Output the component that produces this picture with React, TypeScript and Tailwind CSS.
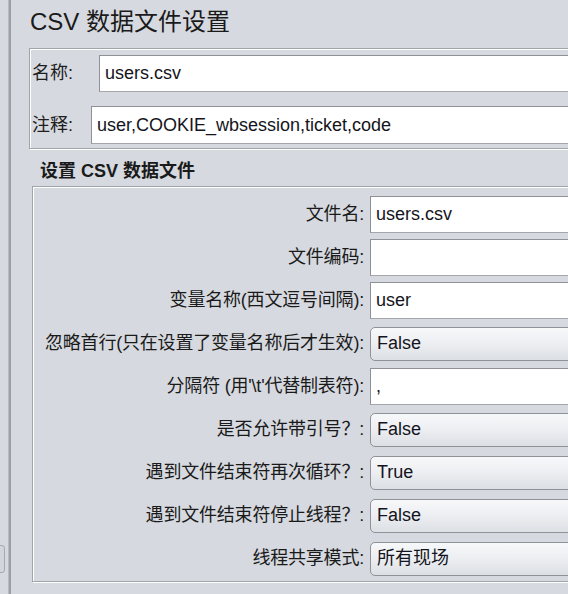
import React from 'react'

type Row = { label: string; value: string; kind: 'text' | 'combo' }

const rows: Row[] = [
  { label: '文件名:', value: 'users.csv', kind: 'text' },
  { label: '文件编码:', value: '', kind: 'text' },
  { label: '变量名称(西文逗号间隔):', value: 'user', kind: 'text' },
  { label: '忽略首行(只在设置了变量名称后才生效):', value: 'False', kind: 'combo' },
  { label: "分隔符 (用'\\t'代替制表符):", value: ',', kind: 'text' },
  { label: '是否允许带引号？:', value: 'False', kind: 'combo' },
  { label: '遇到文件结束符再次循环？:', value: 'True', kind: 'combo' },
  { label: '遇到文件结束符停止线程？:', value: 'False', kind: 'combo' },
  { label: '线程共享模式:', value: '所有现场', kind: 'combo' },
]

function TextField({ value, className = '' }: { value: string; className?: string }) {
  return (
    <div
      className={`flex items-center bg-white border border-[#a3a6ab] border-t-[#8e9196] border-l-[#8e9196] pl-[5px] text-[18px] text-[#141420] ${className}`}
    >
      {value}
    </div>
  )
}

function Combo({ value }: { value: string }) {
  return (
    <div className="flex items-center h-[34px] rounded-[5px] border border-[#8f9297] bg-gradient-to-b from-[#f7f8fa] via-[#eceef1] to-[#dcdfe4] pl-[6px] text-[18px] text-[#141420]">
      {value}
    </div>
  )
}

export default function App() {
  return (
    <div
      className="relative w-[568px] h-[594px] overflow-hidden bg-[#d6d9df] flex"
      style={{ fontFamily: '"Liberation Sans", "Noto Sans CJK SC", sans-serif' }}
    >
      {/* left split pane edge */}
      <div className="w-[8px] shrink-0 flex flex-col">
        <div className="mt-[545px] ml-[-4px] w-[9px] h-[28px] rounded-[3px] border border-[#a6a9ae] bg-[#d2d5db]" />
      </div>
      <div className="w-[1px] shrink-0 bg-[#b9bcc1]" />
      <div className="w-[2px] shrink-0 bg-[#9c9fa4]" />

      {/* main panel */}
      <div className="w-[640px] shrink-0 flex flex-col">
        <div className="mt-[6px] ml-[19px] text-[24px] leading-[32px] text-[#1a1a1a]">CSV 数据文件设置</div>

        <div className="mt-[10px] ml-[18px] border border-[#a1a4a9] shadow-[inset_1px_1px_0_#fff,1px_1px_0_#fff] pl-[2px] pt-[6px] pb-[4px] flex flex-col gap-[14px]">
          <div className="flex items-center">
            <div className="w-[67px] text-[18px] text-[#1e1e1e]">名称:</div>
            <TextField value="users.csv" className="flex-1 h-[37px]" />
          </div>
          <div className="flex items-center">
            <div className="w-[59px] text-[18px] text-[#1e1e1e]">注释:</div>
            <TextField value="user,COOKIE_wbsession,ticket,code" className="flex-1 h-[38px]" />
          </div>
        </div>

        <div className="mt-[10px] ml-[29px] text-[18px] leading-[24px] font-bold text-[#1a1a1a]">设置 CSV 数据文件</div>

        <div className="mt-[3px] ml-[21px] border border-[#a1a4a9] shadow-[inset_1px_1px_0_#fff,1px_1px_0_#fff] pt-[6px] pb-[1px]">
          {rows.map((r) => (
            <div key={r.label} className="grid grid-cols-[331px_1fr] gap-x-[6px] h-[43px] items-center">
              <div className="text-right text-[18px] tracking-[-0.2px] text-[#1a1a1a] whitespace-nowrap">{r.label}</div>
              {r.kind === 'text' ? <TextField value={r.value} className="h-[37px]" /> : <Combo value={r.value} />}
            </div>
          ))}
        </div>
      </div>
    </div>
  )
}
